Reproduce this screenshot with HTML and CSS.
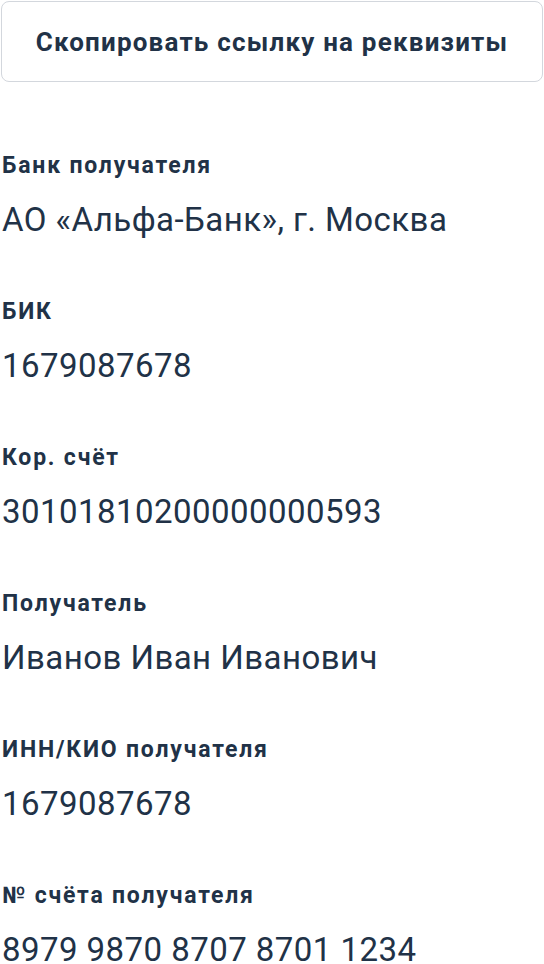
FILE: index.html
```html
<!DOCTYPE html>
<html lang="ru">
<head>
<meta charset="utf-8">
<link rel="stylesheet" href="styles.css">
</head>
<body>
<div class="page">
  <button class="copy-btn" type="button">Скопировать ссылку на реквизиты</button>
  <dl class="details">
    <div class="row">
      <dt class="label">Банк получателя</dt>
      <dd class="value">АО «Альфа-Банк», г. Москва</dd>
    </div>
    <div class="row">
      <dt class="label">БИК</dt>
      <dd class="value">1679087678</dd>
    </div>
    <div class="row">
      <dt class="label">Кор. счёт</dt>
      <dd class="value">30101810200000000593</dd>
    </div>
    <div class="row">
      <dt class="label">Получатель</dt>
      <dd class="value">Иванов Иван Иванович</dd>
    </div>
    <div class="row">
      <dt class="label">ИНН/КИО получателя</dt>
      <dd class="value">1679087678</dd>
    </div>
    <div class="row">
      <dt class="label">№ счёта получателя</dt>
      <dd class="value">8979 9870 8707 8701 1234</dd>
    </div>
  </dl>
</div>
</body>
</html>
```

FILE: styles.css
```css
* { box-sizing: border-box; }
html, body { margin: 0; padding: 0; background: #ffffff; }
body {
  font-family: Roboto, "Noto Sans", sans-serif;
  color: #213247;
}
.page {
  padding: 1px 1px 0 1px;
}
.copy-btn {
  display: flex;
  align-items: center;
  justify-content: center;
  width: 100%;
  height: 81px;
  margin: 0;
  padding: 0;
  border: 1px solid #d3d7dd;
  border-radius: 8px;
  background: #ffffff;
  font-family: Roboto, sans-serif;
  font-weight: 700;
  font-size: 26px;
  letter-spacing: 1.2px;
  color: #213247;
}
.details {
  margin: 72px 0 0 0;
  padding: 0 0 0 1px;
  display: flex;
  flex-direction: column;
  gap: 63px;
}
.row {
  display: flex;
  flex-direction: column;
  gap: 25px;
}
.label {
  margin: 0;
  font-weight: 700;
  font-size: 23px;
  line-height: 24px;
  letter-spacing: 1.8px;
}
.value {
  margin: 0;
  font-weight: 400;
  font-size: 33px;
  line-height: 34px;
  letter-spacing: 0.45px;
}
```
